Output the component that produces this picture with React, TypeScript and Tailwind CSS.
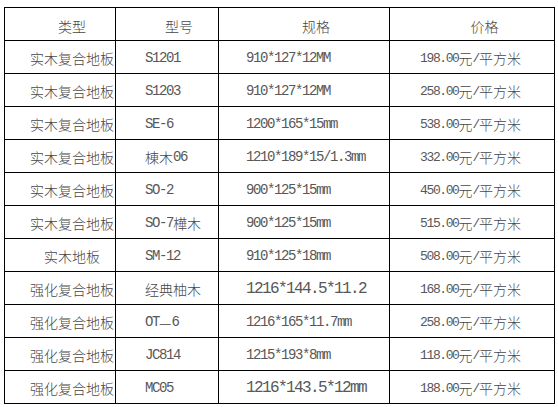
import React from "react";

type Row = [string, string, string, string, string?];

const rows: Row[] = [
  ["实木复合地板", "S1201", "910*127*12MM", "198.00元/平方米"],
  ["实木复合地板", "S1203", "910*127*12MM", "258.00元/平方米"],
  ["实木复合地板", "SE-6", "1200*165*15mm", "538.00元/平方米"],
  ["实木复合地板", "棟木06", "1210*189*15/1.3mm", "332.00元/平方米"],
  ["实木复合地板", "SO-2", "900*125*15mm", "450.00元/平方米"],
  ["实木复合地板", "SO-7樺木", "900*125*15mm", "515.00元/平方米"],
  ["实木地板", "SM-12", "910*125*18mm", "508.00元/平方米"],
  ["强化复合地板", "经典柚木", "1216*144.5*11.2", "168.00元/平方米", "big"],
  ["强化复合地板", "OT—6", "1216*165*11.7mm", "258.00元/平方米"],
  ["强化复合地板", "JC814", "1215*193*8mm", "118.00元/平方米"],
  ["强化复合地板", "MC05", "1216*143.5*12mm", "188.00元/平方米", "big"],
];

const isCjk = (c: string) => /[\u2014\u3000-\u9fff\uff00-\uffef]/.test(c);

function split(text: string): { cjk: boolean; s: string }[] {
  const out: { cjk: boolean; s: string }[] = [];
  for (const ch of text) {
    const c = isCjk(ch);
    const last = out[out.length - 1];
    if (last && last.cjk === c) last.s += ch;
    else out.push({ cjk: c, s: ch });
  }
  return out;
}

function Mixed({ text, latin }: { text: string; latin: string }) {
  return (
    <>
      {split(text).map((p, i) =>
        p.cjk ? (
          <span key={i} className="font-['Noto_Sans_CJK_SC',sans-serif] text-[14px]">
            {p.s}
          </span>
        ) : (
          <span key={i} className={latin}>
            {p.s}
          </span>
        )
      )}
    </>
  );
}

const mono = "font-['Liberation_Mono',monospace] font-normal text-[14px] tracking-[-1.4px] text-[#585858]";
const monoBig = "font-['Liberation_Mono',monospace] font-normal text-[16px] tracking-[-1.6px] text-[#585858]";
const monoPrice = "font-['Liberation_Mono',monospace] font-normal text-[13px] tracking-[-1.4px] text-[#585858]";

export default function App() {
  return (
    <div className="w-[558px] h-[407px] bg-white overflow-hidden pt-[7px] pl-[4px]">
      <div className="w-[551px] bg-black p-px grid grid-cols-[110px_102px_170px_164px] auto-rows-[32px] gap-px text-[#474747] font-['Noto_Sans_CJK_SC',sans-serif] font-light text-[14px] leading-none">
        <div className="bg-white flex items-center justify-center pl-[24px] pt-[4px]">类型</div>
        <div className="bg-white flex items-center justify-center pl-[24px] pt-[4px]">型号</div>
        <div className="bg-white flex items-center justify-center pl-[24px] pt-[4px]">规格</div>
        <div className="bg-white flex items-center justify-center pl-[25px] pt-[4px]">价格</div>
        {rows.map((r, i) => (
          <React.Fragment key={i}>
            <div className="bg-white flex items-center justify-center pl-[24px] pt-[2px] whitespace-nowrap">
              {r[0]}
            </div>
            <div className="bg-white flex items-center pl-[29px] pt-[2px] whitespace-nowrap">
              <Mixed text={r[1]} latin={mono} />
            </div>
            <div className="bg-white flex items-center pl-[27px] pt-[2px] whitespace-nowrap">
              <Mixed text={r[2]} latin={r[4] ? monoBig : mono} />
            </div>
            <div className="bg-white flex items-center justify-center pr-[3px] pt-[2px] whitespace-nowrap">
              <Mixed text={r[3]} latin={monoPrice} />
            </div>
          </React.Fragment>
        ))}
      </div>
    </div>
  );
}
